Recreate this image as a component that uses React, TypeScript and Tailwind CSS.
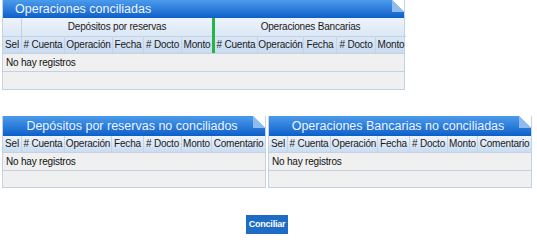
import React from "react";

// Column definitions for each grid
const topLeftCols = [
  { label: "Sel", w: 19 },
  { label: "# Cuenta", w: 43 },
  { label: "Operación", w: 48 },
  { label: "Fecha", w: 31 },
  { label: "# Docto", w: 38 },
  { label: "Monto", w: 30 },
];

const topRightCols = [
  { label: "# Cuenta", w: 43 },
  { label: "Operación", w: 46 },
  { label: "Fecha", w: 33 },
  { label: "# Docto", w: 39 },
  { label: "Monto", w: 30 },
];

const bottomCols = [
  { label: "Sel", w: 19 },
  { label: "# Cuenta", w: 43 },
  { label: "Operación", w: 47 },
  { label: "Fecha", w: 32 },
  { label: "# Docto", w: 38 },
  { label: "Monto", w: 30 },
  { label: "Comentario", w: 53 },
];

// Folded corner drawn at the top-right of each panel header
const Fold = () => (
  <svg
    width="12"
    height="12"
    viewBox="0 0 12 12"
    className="absolute top-0 right-0"
  >
    <polygon points="0,0 12,0 12,12" fill="#ffffff" />
    <polygon points="0,0 12,12 0,12" fill="#8fbcf0" />
  </svg>
);

const PanelHeader = ({
  title,
  height,
  center,
}: {
  title: string;
  height: string;
  center?: boolean;
}) => (
  <div
    className={`relative ${height} bg-gradient-to-b from-[#4b9bec] to-[#0b5fca] flex items-center text-[#eef4ff] text-[12.5px] tracking-normal whitespace-nowrap ${
      center ? "justify-center pr-[4px]" : "pl-[12px]"
    }`}
  >
    {title}
    <Fold />
  </div>
);

const HeaderCell = ({ label, w }: { label: string; w: number }) => (
  <div
    style={{ width: w }}
    className="shrink-0 h-full flex items-center justify-center border-r border-[#c3d4e8] last:border-r-0 whitespace-nowrap overflow-hidden"
  >
    {label}
  </div>
);

const EmptyRows = ({ h1, h2 }: { h1: string; h2: string }) => (
  <>
    <div
      className={`${h1} bg-[#f0f0f0] border-b border-[#c3d2e3] flex items-center pl-[3px] text-[#111]`}
    >
      No hay registros
    </div>
    <div className={`${h2} bg-[#f0f0f0]`} />
  </>
);

const BottomPanel = ({ title }: { title: string }) => (
  <div className="w-[264px] border-x border-b border-[#c3d2e3]">
    <PanelHeader title={title} height="h-[20px]" center />
    <div className="h-[17px] flex bg-gradient-to-b from-[#eef3fa] to-[#c9dcf1] text-[#1a1a1a] border-b border-[#c3d2e3]">
      {bottomCols.map((c) => (
        <HeaderCell key={c.label} {...c} />
      ))}
    </div>
    <EmptyRows h1="h-[18px]" h2="h-[16px]" />
  </div>
);

export default function App() {
  return (
    <div
      className="w-[537px] h-[242px] bg-white pl-[2px] text-[10px] tracking-[-0.2px] leading-none"
      style={{ fontFamily: '"Liberation Sans", Arial, sans-serif' }}
    >
      {/* Conciliated operations */}
      <div className="w-[403px] border-x border-b border-[#c3d2e3]">
        <PanelHeader title="Operaciones conciliadas" height="h-[18px]" />
        <div className="flex bg-gradient-to-b from-[#eef3fa] to-[#c9dcf1] text-[#1a1a1a] border-b border-[#c3d2e3]">
          <div className="flex flex-col shrink-0">
            <div className="h-[19px] flex border-b border-[#c3d2e3]">
              <div className="w-[19px] border-r border-[#c3d2e3]" />
              <div className="flex-1 flex items-center justify-center">
                Depósitos por reservas
              </div>
            </div>
            <div className="h-[16px] flex">
              {topLeftCols.map((c) => (
                <HeaderCell key={c.label} {...c} />
              ))}
            </div>
          </div>
          <div className="w-[3px] shrink-0 bg-[#25b44a]" />
          <div className="flex flex-col flex-1">
            <div className="h-[19px] flex items-center justify-center border-b border-[#c3d2e3]">
              Operaciones Bancarias
            </div>
            <div className="h-[16px] flex">
              {topRightCols.map((c) => (
                <HeaderCell key={c.label} {...c} />
              ))}
            </div>
          </div>
        </div>
        <EmptyRows h1="h-[18px]" h2="h-[17px]" />
      </div>

      {/* Non conciliated panels */}
      <div className="flex gap-[2px] mt-[26px]">
        <BottomPanel title="Depósitos por reservas no conciliados" />
        <BottomPanel title="Operaciones Bancarias no conciliadas" />
      </div>

      <div className="w-[530px] flex justify-center mt-[27px]">
        <button className="w-[42px] h-[19px] bg-[#1f6cc4] text-white font-bold text-[9px] tracking-[-0.2px] flex items-center justify-center">
          Conciliar
        </button>
      </div>
    </div>
  );
}
